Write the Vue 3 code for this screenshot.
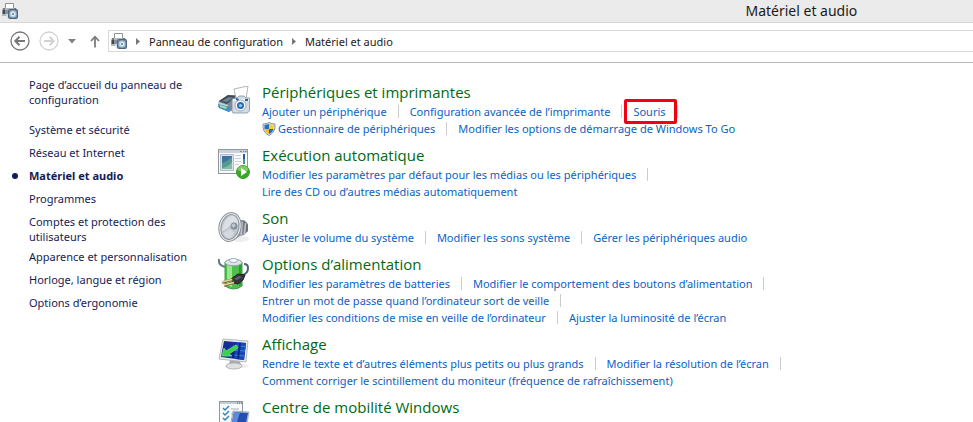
<template>
  <div class="window">
    <!-- Shared drawings -->
    <svg class="defs" width="0" height="0" aria-hidden="true">
      <symbol id="hardware" viewBox="0 0 16 16">
        <path d="M3.500 6V.5h8V6" fill="#fff" stroke="#8d9298" />
        <path d="M1 5h13l2 3v5H0V7z" fill="#b4b8bc" />
        <path d="M1 5h2v2H1zM12 5h2v2h-2z" fill="#737980" />
        <path d="M0 7h6v4H0z" fill="#8b9096" />
        <path d="M1 7h2v4H1z" fill="#44484c" />
        <path d="M4 11h4v4H5z" fill="#c4e4fa" />
        <rect x="6.500" y="6.500" width="9" height="9" rx="1" fill="#6b8298" stroke="#4f677e" />
        <circle cx="11" cy="11" r="3.500" fill="#b3cddd" />
        <circle cx="11" cy="11" r="2" fill="#e8f4fa" />
        <circle cx="11" cy="11" r="1" fill="#5b7a90" />
      </symbol>
    </svg>

    <header class="title-bar">
      <svg class="small-icon" viewBox="0 0 16 16" aria-hidden="true"><use href="#hardware" /></svg>
      <h1>Matériel et audio</h1>
    </header>

    <div class="toolbar">
      <button type="button" class="round" aria-label="Précédent">
        <svg viewBox="0 0 20 20" fill="none" stroke="#777">
          <circle cx="10" cy="10" r="9" stroke-width="1.300" />
          <path d="M5.500 10H15M9.500 5.800L5.300 10l4.200 4.200" stroke-width="2" />
        </svg>
      </button>
      <button type="button" class="round" aria-label="Suivant" disabled>
        <svg viewBox="0 0 20 20" fill="none" stroke="#d2d2d2">
          <circle cx="10" cy="10" r="9" stroke-width="1.300" />
          <path d="M5 10h9.500M10.500 5.800l4.200 4.200-4.200 4.200" stroke-width="2" />
        </svg>
      </button>
      <button type="button" class="recent" aria-label="Emplacements récents">
        <svg viewBox="0 0 8 5"><path d="M0 0h8L4 4.500z" fill="#808080" /></svg>
      </button>
      <button type="button" class="up" aria-label="Dossier parent">
        <svg viewBox="0 0 10 13" fill="none" stroke="#7c7c7c" stroke-width="1.800">
          <path d="M5 12.500V2M1 6l4-4.300L9 6" />
        </svg>
      </button>
      <nav class="address" aria-label="Adresse">
        <svg class="small-icon" viewBox="0 0 16 16" aria-hidden="true"><use href="#hardware" /></svg>
        <template v-for="crumb in crumbs" :key="crumb">
          <svg class="chevron" viewBox="0 0 4 7" aria-hidden="true"><path d="M0 0l4 3.500L0 7z" fill="#777" /></svg>
          <a href="#">{{ crumb }}</a>
        </template>
      </nav>
    </div>

    <div class="content">
      <nav class="sidebar" aria-label="Panneau de configuration">
        <a href="#" class="home">Page d’accueil du panneau de configuration</a>
        <a
          v-for="item in categories"
          :key="item"
          href="#"
          :class="{ active: item === current }"
        >{{ item }}</a>
      </nav>

      <main>
        <section v-for="section in sections" :key="section.title">
          <!-- Printer and camera -->
          <svg v-if="section.icon === 'devices'" class="icon" viewBox="0 0 32 32" aria-hidden="true">
            <path d="M1 15l9-6h10v12l-9 5L0 21z" fill="#7e8a95" />
            <path d="M1 15l9-6 8 1-9 8z" fill="#3f4b57" />
            <path d="M4 15l7-4 4 .5-6 4.500z" fill="#6f8698" />
            <path d="M0 16l10 3v5L0 20z" fill="#c7d0d8" />
            <path d="M0 18l12 3-1 5-10-4z" fill="#3c8fcd" />
            <path d="M2 19l7 2-1 2-6-2z" fill="#a6e09a" />
            <path d="M16 3l14-3-2 13-10-1z" fill="#fff" stroke="#9aa3aa" stroke-width=".8" />
            <path d="M14 13l5-1 2-2h5l2 2h3.500v13L29 27H15l-1-2z" fill="#d3dbe3" stroke="#82909c" stroke-width=".8" />
            <path d="M15 13h16v2H15z" fill="#edf1f4" />
            <circle cx="22.500" cy="19.500" r="5.500" fill="#f1f5f8" stroke="#8a9dac" stroke-width=".8" />
            <circle cx="22.500" cy="19.500" r="3.500" fill="#2b6cae" />
            <circle cx="22.500" cy="19.500" r="1.600" fill="#8fd0f5" />
            <path d="M18 12l3 1-1 2-2-1zM27 13h3v2h-3z" fill="#2466a8" />
          </svg>
          <!-- Media window -->
          <svg v-else-if="section.icon === 'autoplay'" class="icon" viewBox="0 0 32 32" aria-hidden="true">
            <rect x=".5" y=".5" width="29" height="24" fill="#f8f9fa" stroke="#8e969e" />
            <path d="M1 1h28v3H1z" fill="#ccd2d9" />
            <path d="M22 2.500h1.500M25 2.500h1M27 2.500h1.500" stroke="#6b7885" />
            <rect x="2.500" y="5.500" width="13" height="16" fill="#dbe1e8" stroke="#b5bfc9" />
            <path d="M4 7h10v13H4z" fill="#3d73a0" />
            <path d="M4 14q6-2 10-6v12H4z" fill="#549a90" />
            <path d="M4 19q7-1 10-6v7H4z" fill="#83bf9f" />
            <path d="M17 6.500h6M17 9.500h6M17 12.500h6M17 15.500h4" stroke="#cdd1d5" />
            <path d="M25 5h2v10h-2z" fill="#3b9a8a" />
            <path d="M25 5h2v5h-2z" fill="#2a5795" />
            <circle cx="25" cy="23" r="6.500" fill="#38a823" stroke="#3c9a2c" />
            <path d="M19.300 21a6 6 0 0 1 11.400 0q-5 3-11.400 0z" fill="#7ecb63" />
            <path d="M23 19l6 4-6 4z" fill="#fff" />
          </svg>
          <!-- Loudspeaker -->
          <svg v-else-if="section.icon === 'sound'" class="icon" viewBox="0 0 32 32" aria-hidden="true">
            <ellipse cx="22" cy="27" rx="9" ry="3" fill="#eee" />
            <path d="M15 4l7 4h4l4 4v7l-4 4-4 1-6 4z" fill="#8b9197" />
            <path d="M25 9l3 1 2 3v6l-4 3z" fill="#6a727a" />
            <path d="M24 10l-1 13M27.500 11l-1 11" stroke="#c3c8cd" stroke-width="1.500" />
            <ellipse cx="12" cy="15" rx="11" ry="14.500" transform="rotate(12 12 15)" fill="#eceeef" stroke="#8b9197" />
            <ellipse cx="12" cy="15" rx="9" ry="12.500" transform="rotate(12 12 15)" fill="#bfc6ce" stroke="#8b949b" />
            <path d="M4 19Q6 5 15 3.500q6 3 5 10.500l-5 1q-3-3-5 1z" fill="#dbe0e5" />
            <path d="M5 21l7-4 4 3-2 5q-5 4-9-4z" fill="#d3d9df" />
            <circle cx="16" cy="14" r="3.500" fill="#858f99" />
            <circle cx="15.500" cy="13.500" r="2" fill="#bdc4ca" />
          </svg>
          <!-- Battery and plug -->
          <svg v-else-if="section.icon === 'power'" class="icon" viewBox="0 0 32 32" aria-hidden="true">
            <path d="M1 1q-1 7 7 8" fill="none" stroke="#667487" stroke-width="2" />
            <path d="M7 4q8-3 17 0v24q-8 6-17 0z" fill="#4cc04b" stroke="#3a9a43" />
            <path d="M9 6h5v23l-5-2z" fill="#9ae78b" />
            <path d="M21 6h2.500v21l-2.500 1z" fill="#2c9a3c" />
            <ellipse cx="15.500" cy="4.500" rx="8.500" ry="3.300" fill="#dbe4e9" stroke="#8fa1a9" />
            <ellipse cx="15.500" cy="2.500" rx="4" ry="2" fill="#f8fbfc" stroke="#9aabb2" />
            <path d="M25 17q5-2 5-7 0-4-4-4" fill="none" stroke="#526177" stroke-width="2" />
            <path d="M13 21l7-5 7 1-2 5-5 4-5-1z" fill="#343538" stroke="#202125" />
            <path d="M16 21l5-3 3 1-5 3z" fill="#646365" />
            <path d="M4 24.500l11-3M6 27.500l10-3" stroke="#725a32" stroke-width="2.600" />
            <path d="M4 24l10-2.500M6 27l10-2.500" stroke="#e8d19c" stroke-width="1.300" />
          </svg>
          <!-- Monitor -->
          <svg v-else-if="section.icon === 'display'" class="icon" viewBox="0 0 32 32" aria-hidden="true">
            <ellipse cx="22" cy="28" rx="9" ry="2" fill="#eee" />
            <path d="M12 22l10 1 1 4-12-1z" fill="#a4a9ae" />
            <ellipse cx="16" cy="28" rx="8" ry="3" fill="#dfe1e3" stroke="#b0b5b9" />
            <path d="M5 1l25 2-2 21L1 21z" fill="#e8eaeb" stroke="#b5babe" />
            <path d="M6 3l22 2-2 17L3 19z" fill="#152c9c" />
            <path d="M15 4l13 1-2 17-9-1z" fill="#1748b4" />
            <path d="M15 7.500l12 1M15 12l12 1M16 17l10 1" stroke="#3d86da" />
            <path d="M17 4l-2 16M22 5l-2 16" stroke="#0b2490" stroke-width="2" />
            <path d="M4 18l2-8 2 3 10-6 2 3-9 6 3 2z" fill="#35d447" stroke="#7be67c" stroke-width=".7" />
          </svg>
          <!-- Mobility settings -->
          <svg v-else class="icon" viewBox="0 0 32 32" aria-hidden="true">
            <rect x="1.500" y=".5" width="23" height="27" fill="#f9fafb" stroke="#8e969e" />
            <path d="M2 1h22v2H2z" fill="#c4cbd3" />
            <path d="M19 2h1M21 2h1M23 2h1" stroke="#4f6071" />
            <path d="M5 7l2 2 4-4M5 12l2 2 4-4M5 17l2 2 4-4" fill="none" stroke="#3385bd" stroke-width="1.500" />
            <path d="M13 8h8M13 13h3M13 18h2" stroke="#a7afb6" />
            <path d="M15 10l16 1-3 17H12z" fill="#c5d0db" stroke="#8798a8" stroke-width=".7" />
            <path d="M16 11l14 1-3 15H13z" fill="#244eb0" />
            <path d="M16 11l6 .5L17 27h-4z" fill="#5b8cdb" />
          </svg>

          <div class="details">
            <h2><a href="#">{{ section.title }}</a></h2>
            <ul v-if="section.tasks.length">
              <li v-for="task in section.tasks" :key="task.label">
                <svg v-if="task.shield" class="shield" viewBox="0 0 14 14" aria-hidden="true">
                  <path d="M7 .5Q10 2 13 2q1 8-6 11.500Q0 10 1 2q3 0 6-1.500z" fill="#d8dfe5" stroke="#8c98a3" />
                  <path d="M7 2L2.500 3v4H7z" fill="#2871bb" />
                  <path d="M7 2l4.500 1v4H7z" fill="#f4ce3c" />
                  <path d="M7 7H2.500Q3 10 7 12z" fill="#f4b82c" />
                  <path d="M7 7h4.500Q11 10 7 12z" fill="#266bb2" />
                </svg>
                <a href="#" :class="{ highlight: task.highlight }">{{ task.label }}</a>
              </li>
            </ul>
          </div>
        </section>
      </main>
    </div>
  </div>
</template>

<script setup>
import { ref } from "vue";

const crumbs = ["Panneau de configuration", "Matériel et audio"];

const current = ref("Matériel et audio");

const categories = [
  "Système et sécurité",
  "Réseau et Internet",
  "Matériel et audio",
  "Programmes",
  "Comptes et protection des utilisateurs",
  "Apparence et personnalisation",
  "Horloge, langue et région",
  "Options d’ergonomie",
];

const sections = [
  {
    title: "Périphériques et imprimantes",
    icon: "devices",
    tasks: [
      { label: "Ajouter un périphérique" },
      { label: "Configuration avancée de l’imprimante" },
      { label: "Souris", highlight: true },
      { label: "Gestionnaire de périphériques", shield: true },
      { label: "Modifier les options de démarrage de Windows To Go" },
    ],
  },
  {
    title: "Exécution automatique",
    icon: "autoplay",
    tasks: [
      { label: "Modifier les paramètres par défaut pour les médias ou les périphériques" },
      { label: "Lire des CD ou d’autres médias automatiquement" },
    ],
  },
  {
    title: "Son",
    icon: "sound",
    tasks: [
      { label: "Ajuster le volume du système" },
      { label: "Modifier les sons système" },
      { label: "Gérer les périphériques audio" },
    ],
  },
  {
    title: "Options d’alimentation",
    icon: "power",
    tasks: [
      { label: "Modifier les paramètres de batteries" },
      { label: "Modifier le comportement des boutons d’alimentation" },
      { label: "Entrer un mot de passe quand l’ordinateur sort de veille" },
      { label: "Modifier les conditions de mise en veille de l’ordinateur" },
      { label: "Ajuster la luminosité de l’écran" },
    ],
  },
  {
    title: "Affichage",
    icon: "display",
    tasks: [
      { label: "Rendre le texte et d’autres éléments plus petits ou plus grands" },
      { label: "Modifier la résolution de l’écran" },
      { label: "Comment corriger le scintillement du moniteur (fréquence de rafraîchissement)" },
    ],
  },
  {
    title: "Centre de mobilité Windows",
    icon: "mobility",
    tasks: [],
  },
];
</script>

<style>
body {
  margin: 0;
  background: #fff;
}
</style>

<style scoped>
.window {
  display: flex;
  flex-direction: column;
  height: 100vh;
  overflow: hidden;
  background: #fff;
  color: #1a1a1a;
  font-family: "Noto Sans", "Open Sans", sans-serif;
  font-size: 11px;
}

.defs {
  position: absolute;
}

a {
  color: inherit;
  text-decoration: none;
}

a:hover {
  text-decoration: underline;
}

.title-bar {
  display: flex;
  flex: none;
  align-items: center;
  height: 22px;
  padding-left: 2px;
  background: #ebebeb;
  border-bottom: 1px solid #d8d8d8;
}

.title-bar h1 {
  flex: 1;
  margin: 0;
  padding-left: 63%;
  font-size: 14px;
  font-weight: 400;
  line-height: 22px;
  text-align: center;
}

.small-icon {
  flex: none;
  width: 16px;
  height: 16px;
}

.toolbar {
  display: flex;
  flex: none;
  align-items: center;
  height: 36px;
  padding: 0 0 3px 10px;
  border-bottom: 1px solid #b4b9be;
}

button {
  display: flex;
  flex: none;
  padding: 0;
  border: 0;
  background: none;
}

.round {
  width: 20px;
  height: 20px;
  margin-right: 9px;
}

.round svg,
.recent svg,
.up svg {
  width: 100%;
}

.recent {
  width: 8px;
  margin-right: 14px;
}

.up {
  width: 10px;
  margin-right: 8px;
}

.address {
  display: flex;
  flex: 1;
  align-items: center;
  height: 20px;
  padding-left: 2px;
  border: 1px solid #d9d9d9;
  border-right: 0;
}

.chevron {
  width: 4px;
  height: 7px;
  margin: 0 9px;
}

.content {
  display: flex;
  align-items: flex-start;
}

.sidebar {
  display: flex;
  flex: none;
  flex-direction: column;
  width: 165px;
  padding: 14px 24px 0 29px;
  color: #151c55;
}

.sidebar a {
  min-height: 18px;
  padding-bottom: 5px;
  line-height: 15px;
}

.sidebar .home {
  margin-bottom: 10px;
}

.sidebar .active {
  position: relative;
  font-weight: 700;
}

.sidebar .active::before {
  content: "";
  position: absolute;
  top: 5px;
  left: -17px;
  width: 6px;
  height: 6px;
  border-radius: 50%;
  background: #151c55;
}

main {
  flex: 1;
  padding-top: 19px;
}

section {
  display: flex;
  gap: 12px;
  margin-bottom: 8px;
}

.icon {
  flex: none;
  width: 32px;
  height: 32px;
  margin: 4px 0 -5px;
}

.details {
  flex: 1;
  max-width: 560px;
}

h2 {
  margin: 0;
  color: #006a12;
  font-family: "Open Sans", "Noto Sans", sans-serif;
  font-size: 15px;
  font-weight: 400;
  line-height: 21px;
}

ul {
  display: flex;
  flex-wrap: wrap;
  margin: 0;
  padding: 0;
  list-style: none;
}

li {
  display: flex;
  align-items: center;
  height: 17px;
  color: #0a62c4;
  white-space: nowrap;
}

li:not(:last-child)::after {
  content: "";
  width: 1px;
  height: 13px;
  margin: 0 11px;
  background: #ccc;
}

.shield {
  width: 14px;
  height: 14px;
  margin-right: 2px;
}

.highlight {
  position: relative;
}

.highlight::after {
  content: "";
  position: absolute;
  inset: -5px -11px -5px -9px;
  border: 3px solid #f00010;
  border-radius: 2px;
}
</style>
